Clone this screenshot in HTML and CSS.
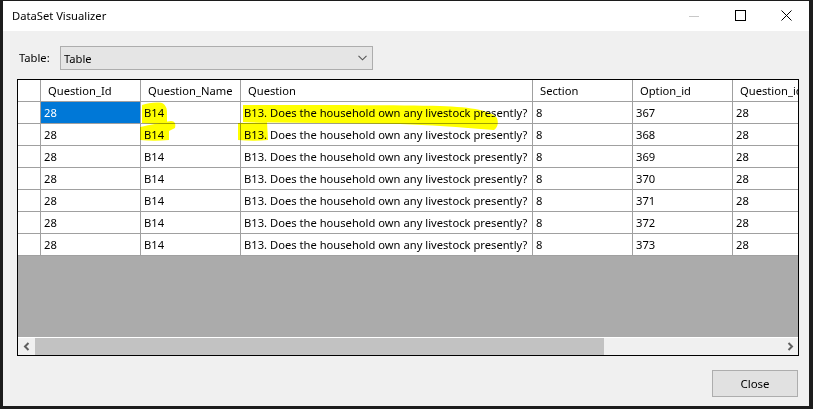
FILE: index.html
```html
<!DOCTYPE html>
<html>
<head>
<meta charset="utf-8">
<link rel="stylesheet" href="styles.css">
</head>
<body>
<div class="window">
  <div class="titlebar">
    <span class="title">DataSet Visualizer</span>
    <div class="controls">
      <span class="ctl min"><svg width="10" height="10" viewBox="0 0 10 10"><path d="M0 5.5H10" stroke="#c8c8c8" stroke-width="1"/></svg></span>
      <span class="ctl max"><svg width="11" height="11" viewBox="0 0 11 11"><rect x="0.5" y="0.5" width="10" height="10" fill="none" stroke="#000" stroke-width="1"/></svg></span>
      <span class="ctl close"><svg width="11" height="11" viewBox="0 0 11 11"><path d="M0.5 0.5L10.5 10.5M10.5 0.5L0.5 10.5" stroke="#000" stroke-width="1"/></svg></span>
    </div>
  </div>
  <div class="content">
    <div class="picker">
      <span class="label">Table:</span>
      <div class="combo">
        <span>Table</span>
        <svg class="chev" width="9" height="6" viewBox="0 0 9 6"><path d="M0.5 0.8L4.5 4.8L8.5 0.8" fill="none" stroke="#555" stroke-width="1.1"/></svg>
      </div>
    </div>
    <div class="grid">
      <div class="rows">
        <div class="row head">
          <div class="c rh"></div><div class="c">Question_Id</div><div class="c">Question_Name</div><div class="c">Question</div><div class="c">Section</div><div class="c">Option_id</div><div class="c">Question_id</div>
        </div>
        <div class="row"><div class="c rh"></div><div class="c sel">28</div><div class="c">B14</div><div class="c">B13. Does the household own any livestock presently?</div><div class="c">8</div><div class="c">367</div><div class="c">28</div></div>
        <div class="row"><div class="c rh"></div><div class="c">28</div><div class="c">B14</div><div class="c">B13. Does the household own any livestock presently?</div><div class="c">8</div><div class="c">368</div><div class="c">28</div></div>
        <div class="row"><div class="c rh"></div><div class="c">28</div><div class="c">B14</div><div class="c">B13. Does the household own any livestock presently?</div><div class="c">8</div><div class="c">369</div><div class="c">28</div></div>
        <div class="row"><div class="c rh"></div><div class="c">28</div><div class="c">B14</div><div class="c">B13. Does the household own any livestock presently?</div><div class="c">8</div><div class="c">370</div><div class="c">28</div></div>
        <div class="row"><div class="c rh"></div><div class="c">28</div><div class="c">B14</div><div class="c">B13. Does the household own any livestock presently?</div><div class="c">8</div><div class="c">371</div><div class="c">28</div></div>
        <div class="row"><div class="c rh"></div><div class="c">28</div><div class="c">B14</div><div class="c">B13. Does the household own any livestock presently?</div><div class="c">8</div><div class="c">372</div><div class="c">28</div></div>
        <div class="row"><div class="c rh"></div><div class="c">28</div><div class="c">B14</div><div class="c">B13. Does the household own any livestock presently?</div><div class="c">8</div><div class="c">373</div><div class="c">28</div></div>
      </div>
      <div class="empty"></div>
      <div class="hscroll">
        <div class="arrow"><svg width="8" height="9" viewBox="0 0 8 9"><path d="M5.5 1L2 4.5L5.5 8" fill="none" stroke="#606060" stroke-width="2"/></svg></div>
        <div class="thumb"></div>
        <div class="track"></div>
        <div class="arrow"><svg width="8" height="9" viewBox="0 0 8 9"><path d="M2.5 1L6 4.5L2.5 8" fill="none" stroke="#606060" stroke-width="2"/></svg></div>
      </div>
      <svg class="marker" width="780" height="80" viewBox="0 0 780 80">
        <path d="M124 25 C130 23 138 22 144 23 C148 25 149 29 149 33 L149 43 C141 44 132 44 124 43 Z" fill="#ffff00"/>
        <path d="M122 47 C132 45 145 42 153 41 C157 41 158 44 157 48 L151 51 L151 60 C141 61 131 61 122 60 Z" fill="#ffff00"/>
        <path d="M225 25 C300 25 380 25 422 26 C455 27 474 31 479 38 C481 44 479 48 476 50 C440 47 410 45 382 44 L300 43 L225 42 Z" fill="#ffff00"/>
        <path d="M220 43 L249 42 L250 60 C240 61 230 61 220 60 Z" fill="#ffff00"/>
      </svg>
    </div>
    <div class="footer">
      <button class="btn">Close</button>
    </div>
  </div>
</div>
</body>
</html>
```

FILE: styles.css
```css
html, body {
  margin: 0;
  padding: 0;
  background: #1c1c1c;
  width: 813px;
  height: 409px;
  overflow: hidden;
  font-family: "Noto Sans", "Open Sans", sans-serif;
  font-size: 11.2px;
  color: #000;
}

.window {
  margin: 1px 0 0 3px;
  width: 806px;
  height: 405px;
  background: #f0f0f0;
  display: flex;
  flex-direction: column;
}

.titlebar {
  height: 30px;
  background: #fff;
  display: flex;
  align-items: center;
  justify-content: space-between;
  padding-left: 9px;
}

.title {
  margin-top: -1px;
}

.controls {
  display: flex;
  height: 100%;
}

.ctl {
  width: 46px;
  display: flex;
  align-items: center;
  justify-content: center;
  padding-bottom: 1px;
}

.content {
  flex: 1;
  padding: 15px 0 0 14px;
  display: flex;
  flex-direction: column;
}

.picker {
  display: flex;
  align-items: center;
  height: 24px;
}

.label {
  width: 41px;
  padding-left: 2px;
  margin-top: -2px;
}

.combo {
  border: 1px solid #adadad;
  background: #e5e5e5;
  display: flex;
  align-items: center;
  justify-content: space-between;
  padding: 0 5px 0 3px;
  box-sizing: border-box;
  width: 313px;
  height: 24px;
}

.grid {
  position: relative;
  margin-top: 9px;
  width: 782px;
  height: 277px;
  border: 1px solid #000;
  box-sizing: border-box;
  display: flex;
  flex-direction: column;
  background: #ababab;
  overflow: hidden;
}

.rows {
  display: flex;
  flex-direction: column;
  background: #fff;
}

.row {
  display: grid;
  grid-template-columns: 23px 100px 100px 292px 100px 100px 100px;
  height: 22px;
}

.c {
  box-sizing: border-box;
  border-right: 1px solid #a0a0a0;
  border-bottom: 1px solid #a0a0a0;
  padding: 0 3px;
  display: flex;
  align-items: center;
  white-space: nowrap;
  overflow: hidden;
  background: #fff;
}

.head .c {
  padding-left: 7px;
}

.c.rh {
  padding: 0;
}

.c.sel {
  background: #0078d7;
  color: #fff;
}

.empty {
  flex: 1;
}

.hscroll {
  height: 17px;
  border-top: 1px solid #fff;
  display: flex;
  background: #f0f0f0;
}

.arrow {
  width: 17px;
  display: flex;
  align-items: center;
  justify-content: center;
}

.thumb {
  width: 569px;
  background: #c2c2c2;
}

.track {
  flex: 1;
}

.marker {
  position: absolute;
  left: 0;
  top: 0;
  mix-blend-mode: multiply;
  pointer-events: none;
}

.footer {
  display: flex;
  justify-content: flex-end;
  padding: 14px 11px 0 0;
}

.btn {
  width: 86px;
  height: 27px;
  border: 1px solid #adadad;
  background: #e1e1e1;
  font-family: inherit;
  font-size: 11.5px;
  color: #000;
  padding: 0;
}
```
